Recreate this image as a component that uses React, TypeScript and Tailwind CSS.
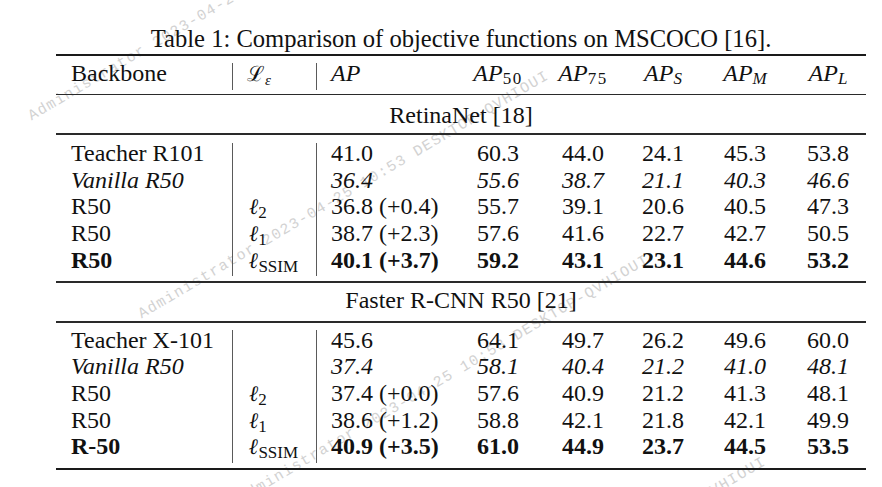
import React from "react";

type Row = { name: string; ell?: string; ap: string; vals: string[]; kind?: "italic" | "bold" };

const sec1: Row[] = [
  { name: "Teacher R101", ap: "41.0", vals: ["60.3", "44.0", "24.1", "45.3", "53.8"] },
  { name: "Vanilla R50", ap: "36.4", vals: ["55.6", "38.7", "21.1", "40.3", "46.6"], kind: "italic" },
  { name: "R50", ell: "2", ap: "36.8 (+0.4)", vals: ["55.7", "39.1", "20.6", "40.5", "47.3"] },
  { name: "R50", ell: "1", ap: "38.7 (+2.3)", vals: ["57.6", "41.6", "22.7", "42.7", "50.5"] },
  { name: "R50", ell: "SSIM", ap: "40.1 (+3.7)", vals: ["59.2", "43.1", "23.1", "44.6", "53.2"], kind: "bold" },
];

const sec2: Row[] = [
  { name: "Teacher X-101", ap: "45.6", vals: ["64.1", "49.7", "26.2", "49.6", "60.0"] },
  { name: "Vanilla R50", ap: "37.4", vals: ["58.1", "40.4", "21.2", "41.0", "48.1"], kind: "italic" },
  { name: "R50", ell: "2", ap: "37.4 (+0.0)", vals: ["57.6", "40.9", "21.2", "41.3", "48.1"] },
  { name: "R50", ell: "1", ap: "38.6 (+1.2)", vals: ["58.8", "42.1", "21.8", "42.1", "49.9"] },
  { name: "R-50", ell: "SSIM", ap: "40.9 (+3.5)", vals: ["61.0", "44.9", "23.7", "44.5", "53.5"], kind: "bold" },
];

function Ell({ sub, bold }: { sub: string; bold?: boolean }) {
  return (
    <span className="not-italic">
      <span
        className={
          bold
            ? "font-['DejaVu_Serif',serif] italic font-bold text-[22px]"
            : "font-['DejaVu_Serif',serif] italic font-normal text-[22px]"
        }
      >
        ℓ
      </span>
      <span className="relative top-[4px] text-[17px] font-normal">{sub}</span>
    </span>
  );
}

function APh({ sub, italicSub }: { sub: string; italicSub?: boolean }) {
  return (
    <span className="italic">
      AP
      <span className={italicSub ? "relative top-[3px] text-[17px] italic" : "relative top-[3px] text-[17px] not-italic tracking-[1.5px]"}>
        {sub}
      </span>
    </span>
  );
}

function BodyRow({ r }: { r: Row }) {
  const style = r.kind === "italic" ? "italic" : r.kind === "bold" ? "font-bold" : "";
  return (
    <div className={`grid grid-cols-[176px_84px_140px_84px_86px_74px_90px_76px] h-[26.6px] leading-[21px] ${style}`}>
      <div className="pl-[15px] whitespace-nowrap">{r.name}</div>
      <div className="border-l border-[#5a5a5a] pl-[16px] whitespace-nowrap">
        {r.ell ? <Ell sub={r.ell} bold={r.kind === "bold"} /> : null}
      </div>
      <div className="border-l border-[#5a5a5a] pl-[14px] whitespace-nowrap">{r.ap}</div>
      {r.vals.map((v, i) => (
        <div key={i} className="text-center">
          {v}
        </div>
      ))}
    </div>
  );
}

export default function App() {
  return (
    <div className="relative w-[882px] h-[487px] overflow-hidden bg-white">
      <div className="absolute left-[30px] top-[110px] origin-left rotate-[-30.5deg] whitespace-nowrap font-['Liberation_Mono',monospace] text-[15px] leading-[16px] tracking-[1.3px] text-[#d2d2d2]">
        Administrator 2023-04-25 10:53 DESKTOP-QVHIOUI
      </div>
      <div className="absolute left-[140px] top-[308px] origin-left rotate-[-30.5deg] whitespace-nowrap font-['Liberation_Mono',monospace] text-[15px] leading-[16px] tracking-[1.3px] text-[#d2d2d2]">
        Administrator 2023-04-25 10:53 DESKTOP-QVHIOUI
      </div>
      <div className="absolute left-[240px] top-[492px] origin-left rotate-[-30.5deg] whitespace-nowrap font-['Liberation_Mono',monospace] text-[15px] leading-[16px] tracking-[1.3px] text-[#d2d2d2]">
        Administrator 2023-04-25 10:53 DESKTOP-QVHIOUI
      </div>
      <div className="absolute left-[357px] top-[694px] origin-left rotate-[-30.5deg] whitespace-nowrap font-['Liberation_Mono',monospace] text-[15px] leading-[16px] tracking-[1.3px] text-[#d2d2d2]">
        Administrator 2023-04-25 10:53 DESKTOP-QVHIOUI
      </div>

      <div className="relative z-10 pt-[28px] pl-[56px] font-['Liberation_Serif','Times_New_Roman',serif] text-[24px] text-[#111]">
        <div className="w-[810px]">
          <div className="h-[21px] leading-[21px] text-center whitespace-nowrap text-[24.6px]">
            Table 1: Comparison of objective functions on MSCOCO [16].
          </div>
          <div className="mt-[5px] h-[2px] bg-[#1a1a1a]" />
          <div className="mt-[7px] grid grid-cols-[176px_84px_140px_84px_86px_74px_90px_76px] h-[26.6px] leading-[21px]">
            <div className="pl-[15px]">Backbone</div>
            <div className="border-l border-[#5a5a5a] pl-[14px] whitespace-nowrap">
              <span className="font-['DejaVu_Serif',serif] text-[21px]">ℒ</span>
              <span className="relative top-[4px] text-[15px] italic">ε</span>
            </div>
            <div className="border-l border-[#5a5a5a] pl-[14px] italic">AP</div>
            <div className="text-center">
              <APh sub="50" />
            </div>
            <div className="text-center">
              <APh sub="75" />
            </div>
            <div className="text-center">
              <APh sub="S" italicSub />
            </div>
            <div className="text-center">
              <APh sub="M" italicSub />
            </div>
            <div className="text-center">
              <APh sub="L" italicSub />
            </div>
          </div>
          <div className="mt-[4.4px] h-[1.5px] bg-[#2a2a2a]" />
          <div className="mt-[9.2px] h-[26.6px] leading-[21px] text-center">RetinaNet [18]</div>
          <div className="mt-[2.2px] h-[1.5px] bg-[#2a2a2a]" />
          <div className="mt-[8.3px]">
            {sec1.map((r, i) => (
              <BodyRow key={i} r={r} />
            ))}
          </div>
          <div className="mt-[5px] h-[1.5px] bg-[#2a2a2a]" />
          <div className="mt-[6.9px] h-[26.6px] leading-[21px] text-center">Faster R-CNN R50 [21]</div>
          <div className="mt-[5.2px] h-[1.5px] bg-[#2a2a2a]" />
          <div className="mt-[7px]">
            {sec2.map((r, i) => (
              <BodyRow key={i} r={r} />
            ))}
          </div>
          <div className="mt-[5px] h-[2px] bg-[#1a1a1a]" />
        </div>
      </div>
    </div>
  );
}
